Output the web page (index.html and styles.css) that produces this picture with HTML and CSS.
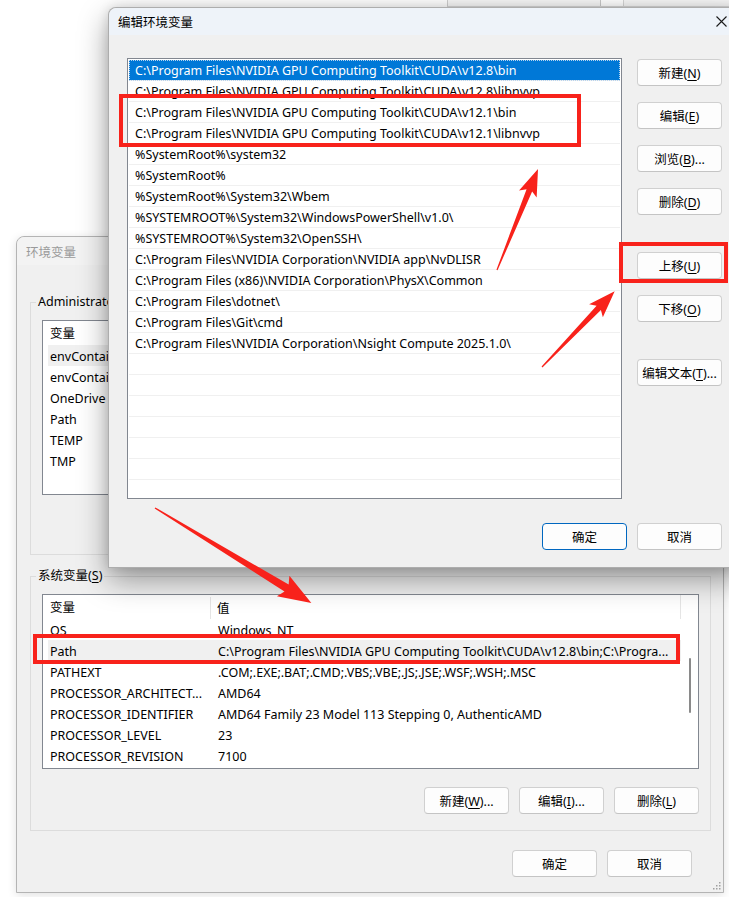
FILE: index.html
```html
<!DOCTYPE html>
<html lang="zh-CN">
<head>
<meta charset="UTF-8">
<title>编辑环境变量</title>
<link rel="stylesheet" href="styles.css">
</head>
<body>
  <div class="peek">
    <div class="peek-split"></div>
  </div>

  <!-- back window: 环境变量 -->
  <div class="window env-window">
    <div class="titlebar inactive"><span class="title">环境变量</span></div>

    <fieldset class="group user-group">
      <legend>Administrator</legend>
      <div class="list-view">
        <div class="list-rows">
          <div class="list-head"><span class="col-name">变量</span><span class="col-value"></span></div>
          <div class="list-row hover"><span class="col-name">envContainerPath</span><span class="col-value"></span></div>
          <div class="list-row"><span class="col-name">envContainerVersion</span><span class="col-value"></span></div>
          <div class="list-row"><span class="col-name">OneDrive</span><span class="col-value"></span></div>
          <div class="list-row"><span class="col-name">Path</span><span class="col-value"></span></div>
          <div class="list-row"><span class="col-name">TEMP</span><span class="col-value"></span></div>
          <div class="list-row"><span class="col-name">TMP</span><span class="col-value"></span></div>
        </div>
      </div>
    </fieldset>

    <fieldset class="group sys-group">
      <legend>系统变量(<u>S</u>)</legend>
      <div class="list-view">
        <div class="list-rows">
          <div class="list-head"><span class="col-name">变量</span><span class="col-value">值</span></div>
          <div class="list-row"><span class="col-name">OS</span><span class="col-value">Windows_NT</span></div>
          <div class="list-row hover"><span class="col-name">Path</span><span class="col-value">C:\Program Files\NVIDIA GPU Computing Toolkit\CUDA\v12.8\bin;C:\Progra...</span></div>
          <div class="list-row"><span class="col-name">PATHEXT</span><span class="col-value">.COM;.EXE;.BAT;.CMD;.VBS;.VBE;.JS;.JSE;.WSF;.WSH;.MSC</span></div>
          <div class="list-row"><span class="col-name">PROCESSOR_ARCHITECT...</span><span class="col-value">AMD64</span></div>
          <div class="list-row"><span class="col-name">PROCESSOR_IDENTIFIER</span><span class="col-value">AMD64 Family 23 Model 113 Stepping 0, AuthenticAMD</span></div>
          <div class="list-row"><span class="col-name">PROCESSOR_LEVEL</span><span class="col-value">23</span></div>
          <div class="list-row"><span class="col-name">PROCESSOR_REVISION</span><span class="col-value">7100</span></div>
        </div>
        <div class="list-scroll"><div class="thumb"></div></div>
      </div>
      <div class="group-buttons">
        <button class="btn">新建(<u>W</u>)...</button>
        <button class="btn">编辑(<u>I</u>)...</button>
        <button class="btn">删除(<u>L</u>)</button>
      </div>
    </fieldset>

    <div class="dialog-footer env-footer">
      <button class="btn">确定</button>
      <button class="btn">取消</button>
    </div>

    <svg class="grip" width="8" height="8" viewBox="0 0 8 8">
      <rect x="6" y="0" width="1.5" height="1.5" fill="#a0a0a0"/>
      <rect x="3" y="3" width="1.5" height="1.5" fill="#a0a0a0"/>
      <rect x="6" y="3" width="1.5" height="1.5" fill="#a0a0a0"/>
      <rect x="0" y="6" width="1.5" height="1.5" fill="#a0a0a0"/>
      <rect x="3" y="6" width="1.5" height="1.5" fill="#a0a0a0"/>
      <rect x="6" y="6" width="1.5" height="1.5" fill="#a0a0a0"/>
    </svg>
  </div>

  <!-- front window: 编辑环境变量 -->
  <div class="window edit-window">
    <div class="titlebar">
      <span class="title">编辑环境变量</span>
      <span class="close">
        <svg width="11" height="11" viewBox="0 0 11 11"><path d="M0.5 0.5L10.5 10.5M10.5 0.5L0.5 10.5" stroke="#1a1a1a" stroke-width="1.1" fill="none"/></svg>
      </span>
    </div>

    <div class="edit-main">
      <div class="path-list">
        <div class="path-row selected">C:\Program Files\NVIDIA GPU Computing Toolkit\CUDA\v12.8\bin</div>
        <div class="path-row">C:\Program Files\NVIDIA GPU Computing Toolkit\CUDA\v12.8\libnvvp</div>
        <div class="path-row">C:\Program Files\NVIDIA GPU Computing Toolkit\CUDA\v12.1\bin</div>
        <div class="path-row">C:\Program Files\NVIDIA GPU Computing Toolkit\CUDA\v12.1\libnvvp</div>
        <div class="path-row">%SystemRoot%\system32</div>
        <div class="path-row">%SystemRoot%</div>
        <div class="path-row">%SystemRoot%\System32\Wbem</div>
        <div class="path-row">%SYSTEMROOT%\System32\WindowsPowerShell\v1.0\</div>
        <div class="path-row">%SYSTEMROOT%\System32\OpenSSH\</div>
        <div class="path-row">C:\Program Files\NVIDIA Corporation\NVIDIA app\NvDLISR</div>
        <div class="path-row">C:\Program Files (x86)\NVIDIA Corporation\PhysX\Common</div>
        <div class="path-row">C:\Program Files\dotnet\</div>
        <div class="path-row">C:\Program Files\Git\cmd</div>
        <div class="path-row">C:\Program Files\NVIDIA Corporation\Nsight Compute 2025.1.0\</div>
        <div class="path-row"></div>
        <div class="path-row"></div>
        <div class="path-row"></div>
        <div class="path-row"></div>
        <div class="path-row"></div>
        <div class="path-row"></div>
        <div class="path-row"></div>
      </div>

      <div class="side-buttons">
        <button class="btn">新建(<u>N</u>)</button>
        <button class="btn">编辑(<u>E</u>)</button>
        <button class="btn">浏览(<u>B</u>)...</button>
        <button class="btn">删除(<u>D</u>)</button>
        <button class="btn spaced">上移(<u>U</u>)</button>
        <button class="btn">下移(<u>O</u>)</button>
        <button class="btn spaced">编辑文本(<u>T</u>)...</button>
      </div>
    </div>

    <div class="dialog-footer edit-footer">
      <button class="btn default">确定</button>
      <button class="btn">取消</button>
    </div>
  </div>

  <!-- red annotations drawn over the screenshot -->
  <svg class="annotations" width="729" height="897" viewBox="0 0 729 897">
    <g fill="none" stroke="#f8221b" stroke-width="4">
      <rect x="121" y="96" width="458" height="49"/>
      <rect x="621" y="244" width="105" height="37"/>
      <rect x="35" y="636" width="643" height="26"/>
    </g>
    <g fill="#f8221b">
      <polygon transform="translate(497 270) rotate(-67.9)" points="0,-0.6 86,-3 82,-9.5 109,0 82,9.5 86,3 0,0.6"/>
      <polygon transform="translate(542 367) rotate(-46.2)" points="0,-0.6 82,-3 78,-9.5 105,0 78,9.5 82,3 0,0.6"/>
      <polygon transform="translate(155 508) rotate(31.3)" points="0,-0.7 154,-4 150,-12 183,0 150,12 154,4 0,0.7"/>
    </g>
  </svg>
</body>
</html>
```

FILE: styles.css
```css
* {
  box-sizing: border-box;
}

body {
  margin: 0;
  width: 729px;
  height: 897px;
  overflow: hidden;
  position: relative;
  background-color: #fff;
  color: #000;
  font-family: "Noto Sans", "Noto Sans CJK SC", sans-serif;
  font-size: 12.5px;
}

button {
  font-family: inherit;
  font-size: 12.5px;
  color: #000;
}

u {
  text-decoration-thickness: 1px;
  text-underline-offset: 2px;
}

/* a window behind everything, only its bottom edge shows */
.peek {
  position: absolute;
  left: 447px;
  top: -2px;
  width: 290px;
  height: 9px;
  background-color: #f7f7f7;
  border-left: 1px solid #cfcfcf;
  border-bottom: 1px solid #d8d8d8;
}

.peek-split {
  margin-left: 152px;
  width: 24px;
  height: 100%;
  border-left: 1px solid #c9c9c9;
  border-right: 1px solid #d6d6d6;
  background-color: #fff;
}

.window {
  position: absolute;
  background-color: #f0f0f0;
  border-radius: 8px 8px 0 0;
}

.titlebar {
  height: 28px;
  display: flex;
  align-items: center;
  padding-left: 9px;
  border-radius: 8px 8px 0 0;
}

.titlebar.inactive {
  background-color: #f3f3f3;
  color: #9a9a9a;
}

.close {
  margin-left: auto;
  width: 46px;
  height: 28px;
  display: flex;
  align-items: center;
  justify-content: center;
}

.btn {
  width: 85px;
  height: 27px;
  padding: 0;
  background-color: #fdfdfd;
  border: 1px solid #d0d0d0;
  border-bottom-color: #c4c4c4;
  border-radius: 4px;
}

.btn.default {
  border: 1px solid #0067c0;
}

.dialog-footer {
  display: flex;
  justify-content: flex-end;
  gap: 10px;
}

/* ---------- back window ---------- */

.env-window {
  left: 16px;
  top: 236px;
  width: 708px;
  height: 657px;
  border: 1px solid #b4b4b4;
  box-shadow: 0 2px 10px rgba(0, 0, 0, 0.12);
}

.group {
  margin: 29px 0 0 13px;
  width: 681px;
  padding: 10px 11px 14px;
  border: 1px solid #dcdcdc;
}

.group legend {
  margin-left: -6px;
  padding: 0 2px;
  line-height: 16px;
}

.user-group {
  padding-bottom: 59px;
}

.sys-group {
  margin-top: 13px;
  padding-bottom: 16px;
}

.list-view {
  height: 175px;
  display: flex;
  background-color: #fff;
  border: 1px solid #828790;
}

.list-rows {
  flex: 1;
  overflow: hidden;
}

.list-head {
  display: grid;
  grid-template-columns: 168px 1fr;
  height: 24px;
  padding-top: 1px;
  align-items: center;
  border-right: 1px solid #e5e5e5;
}

.list-head .col-name {
  padding-left: 7px;
  border-right: 1px solid #e5e5e5;
  line-height: 22px;
}

.list-head .col-value {
  padding-left: 6px;
}

.list-row {
  display: grid;
  grid-template-columns: 163px 1fr;
  height: 21px;
  margin-left: 5px;
  padding-top: 1px;
  align-items: center;
  white-space: nowrap;
}

.list-row span {
  overflow: hidden;
}

.list-row .col-name {
  padding-left: 2px;
}

.list-row .col-value {
  padding-left: 7px;
}

.list-row.hover {
  background-color: #f0f0f0;
}

.list-scroll {
  width: 17px;
}

.thumb {
  margin: 63px 0 0 8px;
  width: 2px;
  height: 55px;
  border-radius: 1px;
  background-color: #8a8a8a;
}

.group-buttons {
  margin-top: 18px;
  display: flex;
  justify-content: flex-end;
  gap: 10px;
}

.env-footer {
  margin-top: 19px;
  padding-right: 31px;
}

.grip {
  position: absolute;
  right: 2px;
  bottom: 2px;
}

/* ---------- front window ---------- */

.edit-window {
  left: 108px;
  top: 7px;
  width: 637px;
  height: 561px;
  border: 1px solid rgba(0, 0, 0, 0.28);
  box-shadow: 0 12px 30px rgba(0, 0, 0, 0.38), 0 0 12px rgba(0, 0, 0, 0.12);
}

.edit-window .titlebar {
  height: 27px;
  background-color: #eef3f9;
}

.edit-window .close {
  height: 27px;
}

.edit-main {
  display: flex;
  gap: 15px;
  padding: 23px 0 0 18px;
}

.path-list {
  width: 495px;
  height: 441px;
  padding: 1px;
  overflow: hidden;
  background-color: #fff;
  border: 1px solid #828790;
}

.path-row {
  height: 21px;
  padding-left: 6px;
  line-height: 21px;
  white-space: nowrap;
  border-bottom: 1px solid #f0f0f0;
}

.path-row.selected {
  background-color: #0078d7;
  color: #fff;
  outline: 1px dotted #b8d4ee;
  outline-offset: -1px;
}

.side-buttons {
  display: flex;
  flex-direction: column;
  gap: 16px;
  padding-top: 1px;
}

.side-buttons .spaced {
  margin-top: 21px;
}

.edit-footer {
  margin-top: 24px;
  padding-right: 22px;
}

/* ---------- annotations ---------- */

.annotations {
  position: absolute;
  left: 0;
  top: 0;
  z-index: 10;
  pointer-events: none;
}
```
